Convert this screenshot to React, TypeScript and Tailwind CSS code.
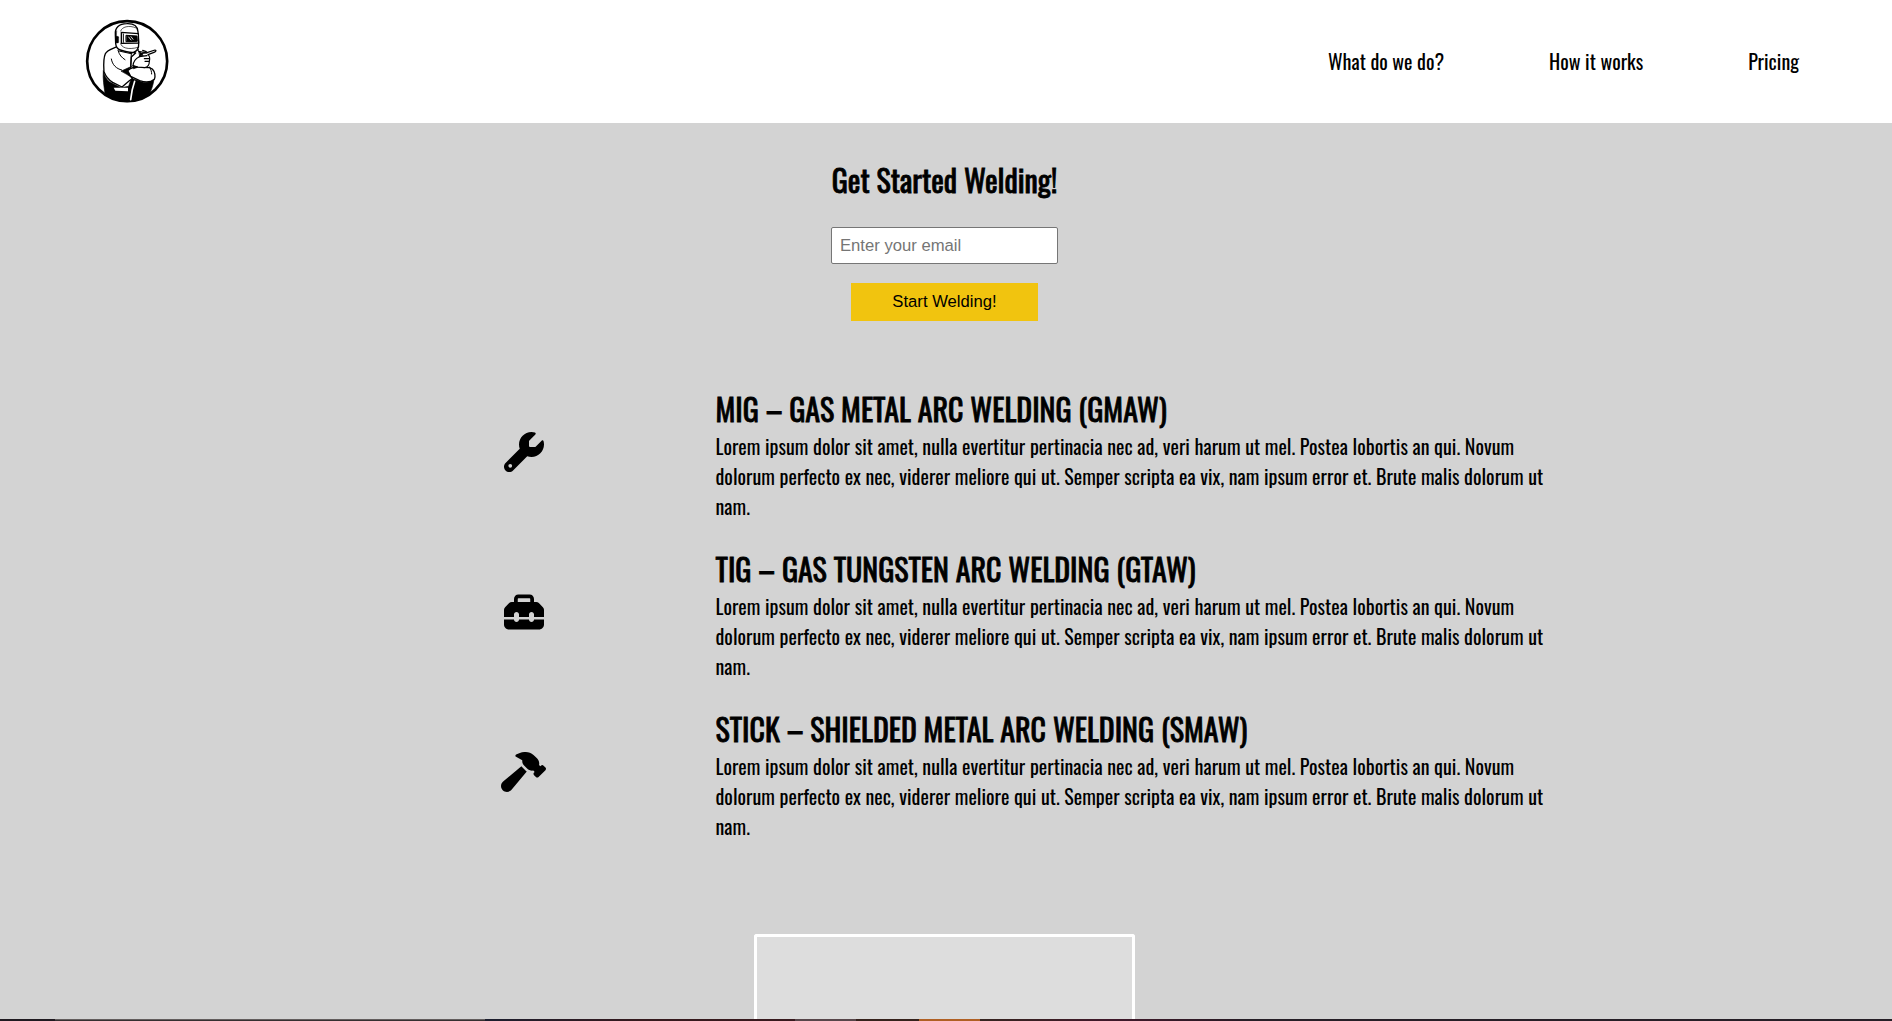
import { FaHammer, FaToolbox, FaWrench } from "react-icons/fa6";
import type { IconType } from "react-icons";

const BODY =
  "Lorem ipsum dolor sit amet, nulla evertitur pertinacia nec ad, veri harum ut mel. Postea lobortis an qui. Novum dolorum perfecto ex nec, viderer meliore qui ut. Semper scripta ea vix, nam ipsum error et. Brute malis dolorum ut nam.";

const features: { title: string; Icon: IconType; iconClass: string }[] = [
  { title: "MIG – GAS METAL ARC WELDING (GMAW)", Icon: FaWrench, iconClass: "h-10 w-10" },
  { title: "TIG – GAS TUNGSTEN ARC WELDING (GTAW)", Icon: FaToolbox, iconClass: "h-10 w-10" },
  { title: "STICK – SHIELDED METAL ARC WELDING (SMAW)", Icon: FaHammer, iconClass: "h-10 w-[45px]" },
];

function Logo() {
  return (
    <svg className="h-[84px] w-[84px]" viewBox="44 26 252 252" fill="none" stroke="#000" strokeLinecap="round" strokeLinejoin="round">
      <circle cx="170.500" cy="152.500" r="120" fill="#fff" strokeWidth="8" />
      {/* overalls */}
      <path
        d="M99 182 C97 205 101 228 104 249 C124 266 145 274 170 274 C195 274 218 266 237 251 C243 240 248 226 251 207 C240 216 228 219 216 215 L183 204 L175 228 L152 232 L118 215 C107 206 102 196 99 182Z"
        fill="#000"
        strokeWidth="2"
      />
      {/* torso and left arm */}
      <path
        d="M140 109 C126 115 110 119 105 130 C98 146 100 166 101 184 C106 197 114 208 127 216 L155 230 L176 212 L186 205 L180 196 L183 140 L196 128 L172 122Z"
        fill="#fff"
        strokeWidth="4"
      />
      <path d="M146 122 L182 130 L205 118 M183 130 L181 166 M143 120 C147 134 154 142 164 148 M123 146 C126 164 138 175 154 179" strokeWidth="3" />
      <path d="M153 182 L184 168 L176 176 L187 182 L178 186 L182 200 L169 192Z" fill="#000" strokeWidth="2" />
      {/* folded forearm */}
      <path
        d="M172 181 C184 171 198 168 210 171 L237 172 L246 176 C254 184 256 199 252 207 C239 218 222 216 208 211 L181 198Z"
        fill="#fff"
        strokeWidth="4"
      />
      <path d="M238 170 C242 178 244 184 244 191" strokeWidth="3" />
      {/* raised hand */}
      <path
        d="M188 166 C189 152 197 144 207 139 L211 130 L230 127 L254 119 C259 120 257 124 251 126 L233 133 C239 138 239 145 237 153 C237 164 232 171 223 172 L203 170Z"
        fill="#fff"
        strokeWidth="3.500"
      />
      <path d="M207 139 L230 136 M222 145 L237 145 M224 153 L236 153 M205 123 L230 128 M217 120 L228 124" strokeWidth="3.500" />
      <path d="M205 121 L219 135 L209 137Z M188 166 L202 171 L190 175Z" fill="#000" strokeWidth="2" />
      {/* helmet */}
      <path
        d="M135 73 C133 51 147 40 169 40 C191 39 202 47 203 64 L205 99 C206 112 201 122 189 126 C177 127 162 123 150 119 C141 116 137 109 136 100Z"
        fill="#fff"
        strokeWidth="4"
      />
      <path d="M151 62 C154 50 175 43 198 53 M151 100 C153 111 171 120 204 111 M139 62 L138 80" strokeWidth="2" />
      <rect x="136" y="78" width="9" height="20" rx="3" fill="#000" strokeWidth="1" />
      <path d="M153 66 L204 70 L205 98 L153 99Z" fill="#fff" strokeWidth="4" />
      <path d="M159 71 V96" strokeWidth="3" />
      <path d="M168 75 L200 77 L201 93 L168 94Z" fill="#000" strokeWidth="3" />
      <path d="M175 80 L182 89 M182 79 L188 87" stroke="#fff" strokeWidth="2.500" />
      {/* belt patch and apron seam */}
      <path d="M130 232 H173 V243 L135 241Z" fill="#fff" stroke="none" />
      <path d="M193 213 C187 230 183 247 181 268" stroke="#fff" strokeWidth="5" />
    </svg>
  );
}

export default function App() {
  return (
    <div className="flex h-[1021px] flex-col overflow-hidden bg-[#d3d3d3] font-['Oswald','Roboto',sans-serif] text-[20px] leading-[30px] font-normal text-black">
      <header className="flex h-[123px] shrink-0 items-center justify-between bg-white pr-[93px] pb-[2px] pl-[85px]">
        <Logo />
        <nav className="flex gap-[105px]">
          <a href="#features">What do we do?</a>
          <a href="#how-it-works">How it works</a>
          <a href="#pricing">Pricing</a>
        </nav>
      </header>

      <main className="flex min-h-0 flex-1 flex-col pt-[34px]">
        <form className="flex w-[1889px] flex-col items-center">
          <h1 className="text-[30px] leading-[45px] [-webkit-text-stroke:0.8px_black]">Get Started Welding!</h1>
          <input
            type="email"
            placeholder="Enter your email"
            className="mt-[25px] h-[37px] w-[227px] rounded-[2px] border border-[#767676] bg-white px-2 font-['Liberation_Sans',Arial,sans-serif] text-[16.670px] leading-5 placeholder:text-[#757575]"
          />
          <button
            type="button"
            className="mt-[19px] h-[38px] w-[187px] bg-[#f1c40f] font-['Liberation_Sans',Arial,sans-serif] text-[16.670px] leading-5"
          >
            Start Welding!
          </button>
        </form>

        <section id="features" className="mt-[65px] ml-[332px] flex w-[1225px] flex-col gap-[25px]">
          {features.map(({ title, Icon, iconClass }) => (
            <article key={title} className="grid h-[135px] grid-cols-[383.500px_1fr]">
              <div className="flex items-center justify-center pb-1">
                <Icon className={iconClass} />
              </div>
              <div>
                <h2 className="text-[30px] leading-[45px] [-webkit-text-stroke:0.8px_black]">{title}</h2>
                <p className="tracking-[0.024px]">{BODY}</p>
              </div>
            </article>
          ))}
        </section>

        <section id="how-it-works" className="mt-[93px] flex min-h-0 w-[1889px] flex-1 justify-center">
          <div className="w-[381px] rounded-t-[3px] border-[3px] border-b-0 border-white bg-[#ddd]" />
        </section>
      </main>

      <footer className="flex h-0.5 shrink-0">
        <div className="w-[55px] bg-[#1f1a20]" />
        <div className="w-[430px] border-t border-[#625d5d] bg-[#353031]" />
        <div className="w-[310px] bg-linear-to-r from-[#1b1e2e] via-[#35191d] to-[#381a1e]" />
        <div className="w-[61px] bg-[#57464a]" />
        <div className="w-[63px] bg-[#35221c]" />
        <div className="w-[61px] bg-[#b06024]" />
        <div className="w-[260px] bg-linear-to-r from-[#35241f] via-[#40182a] to-[#281b25]" />
        <div className="flex-1 bg-[#261f27]" />
      </footer>
    </div>
  );
}
